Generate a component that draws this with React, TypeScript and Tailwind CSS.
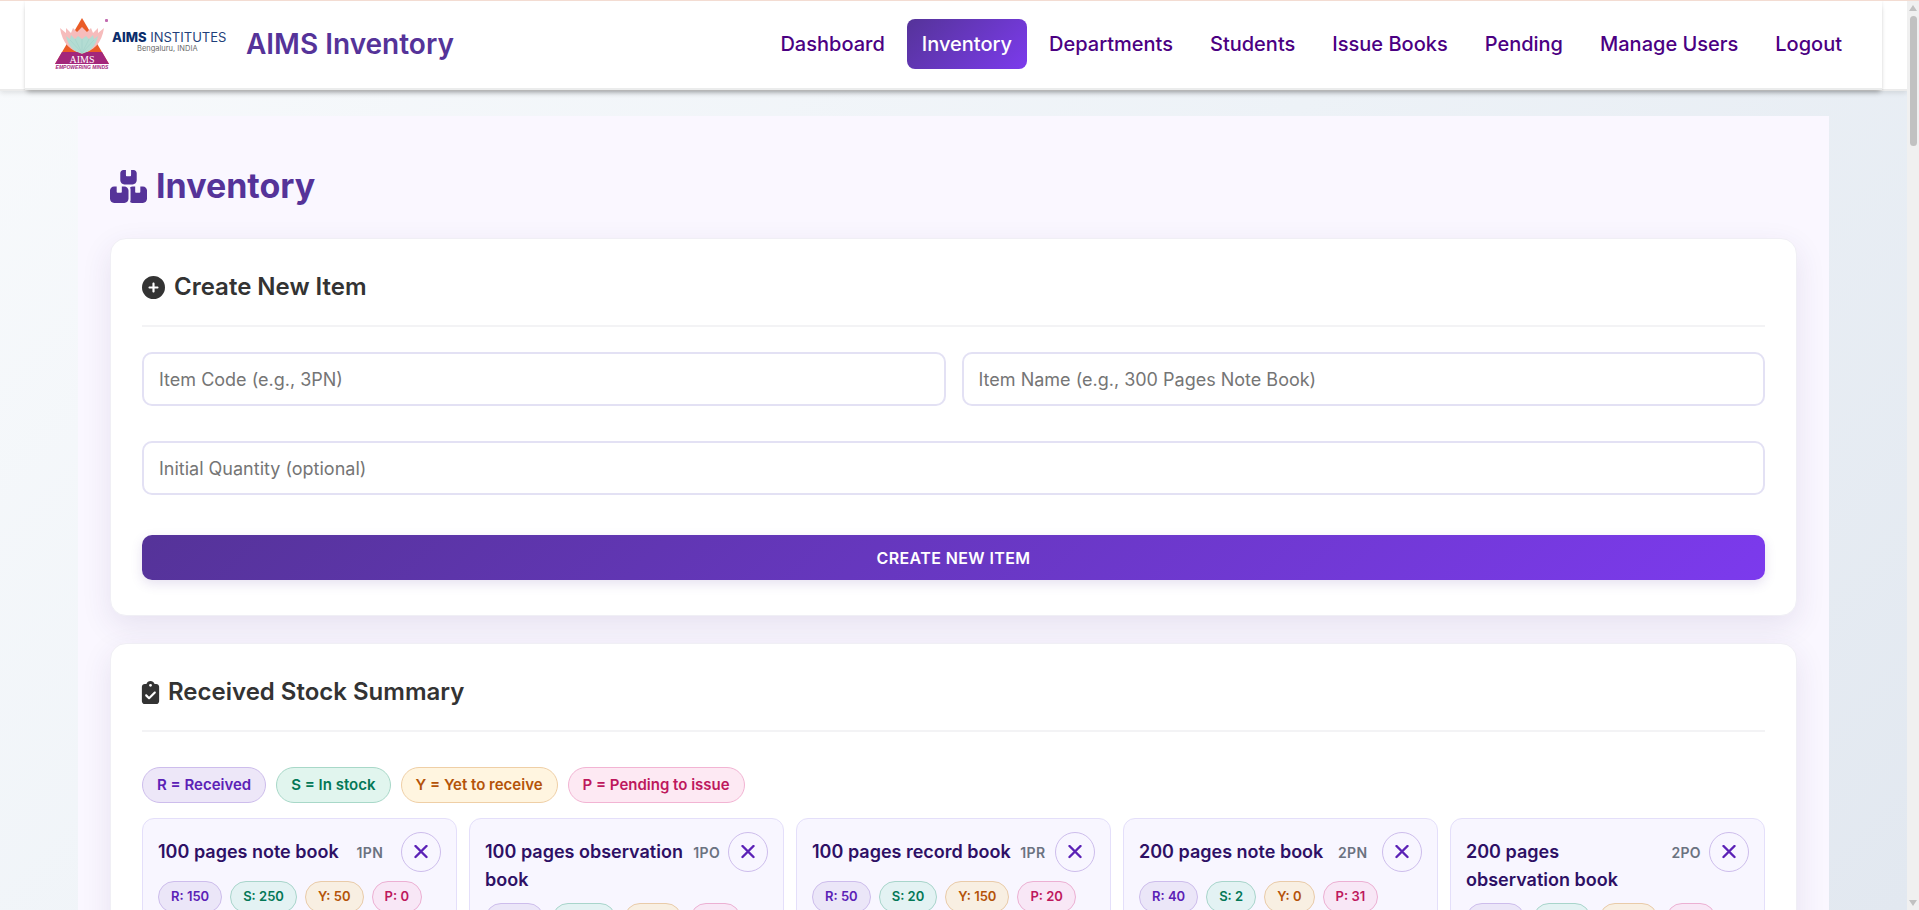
import React from "react";
import { FaBoxesStacked, FaCirclePlus, FaClipboardCheck } from "react-icons/fa6";

const navLinks = [
  "Dashboard",
  "Inventory",
  "Departments",
  "Students",
  "Issue Books",
  "Pending",
  "Manage Users",
  "Logout",
];

const legend = [
  { text: "R = Received", tone: "border-[#cdbdec] bg-[#ede7f8] text-[#5b21b6]" },
  { text: "S = In stock", tone: "border-[#a8d8c8] bg-[#e1f5ee] text-[#047857]" },
  { text: "Y = Yet to receive", tone: "border-[#efcfa6] bg-[#fff5e0] text-[#b45309]" },
  { text: "P = Pending to issue", tone: "border-[#f2b4d3] bg-[#fde9f3] text-[#be185d]" },
];

const softTones = {
  received: "border-[#cdbdec] bg-[#ebe6f8] text-[#5b21b6]",
  stock: "border-[#a8d5cb] bg-[#e3f2f3] text-[#047857]",
  yet: "border-[#e9cba9] bg-[#f8efe2] text-[#b45309]",
  pending: "border-[#ecb0d3] bg-[#f8e7f6] text-[#be185d]",
};

const items = [
  { name: "100 pages note book", code: "1PN", r: 150, s: 250, y: 50, p: 0 },
  { name: "100 pages observation book", code: "1PO", r: 50, s: 150, y: 50, p: 0 },
  { name: "100 pages record book", code: "1PR", r: 50, s: 20, y: 150, p: 20 },
  { name: "200 pages note book", code: "2PN", r: 40, s: 2, y: 0, p: 31 },
  { name: "200 pages observation book", code: "2PO", r: 50, s: 50, y: 50, p: 0 },
];

function Logo() {
  return (
    <svg
      className="h-[54px] w-[175px] shrink-0"
      viewBox="0 0 175 54"
      role="img"
      aria-label="AIMS Institutes"
    >
      <path d="M27 1 L54 47 H0 Z" fill="#ea5b26" />
      <path
        d="M27 36 C16 35 7 26 5 11 L11 16 L11 11 L16 16 L18 11 L22 15 L27 10 L32 15 L36 11 L38 16 L43 11 L43 16 L49 11 C47 26 38 35 27 36 Z"
        fill="#f6bcbc"
      />
      <path
        d="M27 37 C19 35 13 29 11 19 L15 22 L16 18 L20 22 L23 19 L27 22 L31 19 L34 22 L38 18 L39 22 L43 19 C41 29 35 35 27 37 Z"
        fill="#b3dcd3"
      />
      <path
        d="M27 36 V22 M27 36 L20 22 M27 36 L34 22 M27 36 L15 23 M27 36 L39 23"
        stroke="#9ccfc6"
        strokeWidth="0.5"
        fill="none"
      />
      <path d="M7 35 H22 L27 37 L32 35 H47 L54 47 H0 Z" fill="#a3267b" />
      <text x="27" y="46" textAnchor="middle" fontSize="10" fill="#ffffff" fontFamily="Liberation Serif, serif">
        AIMS
      </text>
      <text x="27" y="52" textAnchor="middle" fontSize="5" fontWeight="700" fontStyle="italic" fill="#a3267b" fontFamily="Liberation Sans, sans-serif">
        EMPOWERING MINDS
      </text>
      <rect x="50" y="2" width="3" height="3" rx="1" fill="#c26bb0" />
      <text x="57" y="25" fontSize="13" fill="#1f3f7a" fontFamily="Inter, sans-serif">
        <tspan fontWeight="800" fill="#0b2d6b">AIMS</tspan>
        <tspan fontWeight="400"> INSTITUTES</tspan>
      </text>
      <text x="82" y="34" fontSize="7.5" fill="#6b6b6b" fontFamily="Inter, sans-serif">
        Bengaluru, INDIA
      </text>
    </svg>
  );
}

function SectionTitle({ icon, children }: { icon: React.ReactNode; children: React.ReactNode }) {
  return (
    <h2 className="flex items-center gap-[9px] border-b-2 border-[#f3f3f5] pb-[22px] text-[24px] leading-8 font-semibold text-[#333333]">
      {icon}
      {children}
    </h2>
  );
}

const cardClass =
  "rounded-2xl border border-[#f0eff5] bg-white px-[31px] shadow-[0_10px_30px_rgba(60,40,110,0.10)]";
const inputClass =
  "h-[54px] w-full rounded-[10px] border-2 border-[#e3e1f4] bg-white px-[15px] text-[18px] text-[#333333] placeholder:text-[#757575]";

function Pill({ tone, children }: { tone: string; children: React.ReactNode }) {
  return (
    <span
      className={`flex h-8 items-center rounded-full border px-3 text-[13px] font-semibold whitespace-nowrap ${tone}`}
    >
      {children}
    </span>
  );
}

export default function App() {
  return (
    <div className="flex h-screen flex-col border-t border-[#f3dcd2] bg-white font-['Inter',sans-serif]">
      <div className="flex min-h-0 flex-1">
        <div className="min-w-0 flex-1 overflow-y-auto bg-linear-135 from-[#f8fafc] via-[#edf2f7] to-[#e2e8f0] [scrollbar-width:none]">
          <header className="border-b-2 border-[#ebebeb] bg-white px-[25px] shadow-[0_2px_5px_rgba(0,0,0,0.1)]">
            <div className="-mb-px flex items-center justify-between border-b-2 border-[#ebecec] bg-white px-[25px] pt-4 pb-[17px] shadow-[0_4px_5px_-2px_rgba(0,0,0,0.28),0_0_3px_rgba(0,0,0,0.08)]">
              <div className="flex items-center gap-4 pl-[5px]">
                <Logo />
                <span className="text-[28px] leading-[50px] font-semibold text-[#553399]">AIMS Inventory</span>
              </div>
              <nav className="flex items-center gap-[7px]">
                {navLinks.map((label) => (
                  <a
                    key={label}
                    href="#"
                    className={
                      label === "Inventory"
                        ? "rounded-lg bg-linear-135 from-[#553399] to-[#7c3aed] px-[15px] text-[20px] leading-[50px] font-medium text-white"
                        : "rounded-lg px-[15px] text-[20px] leading-[50px] font-medium text-[#4b0082]"
                    }
                  >
                    {label}
                  </a>
                ))}
              </nav>
            </div>
          </header>

          <main className="mx-auto mt-[25px] max-w-[1751px] bg-[#faf7ff] px-8 pb-8">
            <h1 className="flex items-center gap-[9px] pt-[46px] pb-7 text-[34px] leading-[48px] font-bold text-[#553399]">
              <FaBoxesStacked className="h-[37px] w-[37px]" />
              Inventory
            </h1>

            <section className={`${cardClass} pt-8 pb-[35px]`}>
              <SectionTitle icon={<FaCirclePlus className="h-[23px] w-[23px]" />}>Create New Item</SectionTitle>
              <form className="flex flex-col pt-[25px]" onSubmit={(e) => e.preventDefault()}>
                <div className="flex gap-4">
                  <input className={inputClass} aria-label="Item code" placeholder="Item Code (e.g., 3PN)" />
                  <input
                    className={inputClass}
                    aria-label="Item name"
                    placeholder="Item Name (e.g., 300 Pages Note Book)"
                  />
                </div>
                <input
                  className={`${inputClass} mt-[35px]`}
                  aria-label="Initial quantity"
                  placeholder="Initial Quantity (optional)"
                />
                <button
                  type="submit"
                  className="mt-10 h-[45px] rounded-[10px] bg-linear-135 from-[#553399] to-[#7c3aed] text-[16px] font-semibold tracking-wide text-white uppercase shadow-[0_4px_12px_rgba(85,51,153,0.15)]"
                >
                  Create New Item
                </button>
              </form>
            </section>

            <section className={`${cardClass} mt-[27px] pt-8 pb-8`}>
              <SectionTitle icon={<FaClipboardCheck className="-mx-[3px] h-[23px] w-[23px]" />}>
                Received Stock Summary
              </SectionTitle>
              <div className="flex flex-wrap gap-[10px] pt-[35px] pb-[15px]">
                {legend.map((entry) => (
                  <span
                    key={entry.text}
                    className={`flex h-9 items-center rounded-full border px-[14px] text-[15px] font-semibold ${entry.tone}`}
                  >
                    {entry.text}
                  </span>
                ))}
              </div>
              <div className="grid grid-cols-5 gap-3">
                {items.map((item) => (
                  <article
                    key={item.code}
                    className="rounded-xl border border-[#e4dffa] bg-[#f8f6ff] px-[15px] pt-[13px] pb-4"
                  >
                    <div className="flex items-start justify-between gap-2">
                      <h3 className="pt-[6px] text-[18px] leading-7 font-semibold text-[#2e1065]">{item.name}</h3>
                      <span className="pt-[7px] text-[14px] leading-7 font-semibold tracking-wide text-[#6b7280]">
                        {item.code}
                      </span>
                      <button
                        type="button"
                        aria-label={`Remove ${item.name}`}
                        className="flex size-10 shrink-0 items-center justify-center rounded-full border border-[#cdbdec] text-[#5b21b6]"
                      >
                        <svg viewBox="0 0 14 14" className="size-[14px]" fill="none" stroke="currentColor" strokeWidth="2.4">
                          <path d="M1.5 1 L12.5 12 M12.5 1 L1.5 12" strokeLinecap="round" />
                        </svg>
                      </button>
                    </div>
                    <div className="flex flex-wrap gap-2 pt-[9px]">
                      <Pill tone={softTones.received}>R: {item.r}</Pill>
                      <Pill tone={softTones.stock}>S: {item.s}</Pill>
                      <Pill tone={softTones.yet}>Y: {item.y}</Pill>
                      <Pill tone={softTones.pending}>P: {item.p}</Pill>
                    </div>
                  </article>
                ))}
              </div>
            </section>
          </main>
        </div>

        <div className="flex w-3 shrink-0 flex-col items-center bg-[#f0f0f0] py-1" aria-hidden="true">
          <svg viewBox="0 0 8 6" className="h-[6px] w-2" fill="#c1c1c1">
            <path d="M4 0 L8 6 H0 Z" />
          </svg>
          <div className="mt-[5px] h-[130px] w-[7px] rounded-full bg-[#c1c1c1]" />
          <svg viewBox="0 0 8 6" className="mt-auto h-[6px] w-2" fill="#c1c1c1">
            <path d="M4 6 L8 0 H0 Z" />
          </svg>
        </div>
      </div>
    </div>
  );
}
